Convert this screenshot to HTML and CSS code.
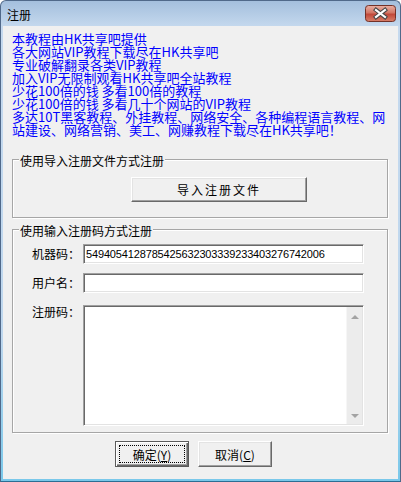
FILE: index.html
```html
<!DOCTYPE html>
<html lang="zh-CN">
<head>
  <meta charset="UTF-8">
  <title>注册</title>
  <link rel="stylesheet" href="styles.css">
</head>
<body>
  <div class="window">
    <div class="titlebar">
      <span class="title">注册</span>
      <span class="close">
        <svg width="31" height="17" viewBox="0 0 31 17">
          <defs>
            <linearGradient id="closeGrad" x1="0" y1="0" x2="0" y2="1">
              <stop offset="0" stop-color="#eab0a4"/>
              <stop offset="0.45" stop-color="#d27766"/>
              <stop offset="0.55" stop-color="#c1493a"/>
              <stop offset="1" stop-color="#d8806a"/>
            </linearGradient>
          </defs>
          <rect x="0.5" y="0.5" width="30" height="16" rx="3" fill="url(#closeGrad)" stroke="#733127"/>
          <path d="M11 5 L20 12 M20 5 L11 12" stroke="#454545" stroke-width="4.2" stroke-linecap="square"/>
          <path d="M11 5 L20 12 M20 5 L11 12" stroke="#ffffff" stroke-width="2.2" stroke-linecap="square"/>
        </svg>
      </span>
    </div>

    <div class="client">
      <div class="notice">
        <p>本教程由HK共享吧提供</p>
        <p>各大网站VIP教程下载尽在HK共享吧</p>
        <p>专业破解翻录各类VIP教程</p>
        <p>加入VIP无限制观看HK共享吧全站教程</p>
        <p>少花100倍的钱 多看100倍的教程</p>
        <p>少花100倍的钱 多看几十个网站的VIP教程</p>
        <p>多达10T黑客教程、外挂教程、网络安全、各种编程语言教程、网</p>
        <p>站建设、网络营销、美工、网赚教程下载尽在HK共享吧！</p>
      </div>

      <div class="group group-file">
        <div class="legend">使用导入注册文件方式注册</div>
        <button class="btn btn-import">导入注册文件</button>
      </div>

      <div class="group group-code">
        <div class="legend">使用输入注册码方式注册</div>
        <div class="form">
          <label>机器码：</label>
          <div class="edit">5494054128785425632303339233403276742006</div>
          <label>用户名：</label>
          <div class="edit"></div>
          <label class="label-top">注册码：</label>
          <div class="memo">
            <div class="memo-body"></div>
            <div class="scroll">
              <span class="arrow up"></span>
              <span class="arrow down"></span>
            </div>
          </div>
        </div>
      </div>

      <div class="actions">
        <button class="btn btn-default">确定(<u>Y</u>)</button>
        <button class="btn">取消(<u>C</u>)</button>
      </div>
    </div>
  </div>
</body>
</html>
```

FILE: styles.css
```css
body {
  margin: 0;
  font-family: "Noto Sans CJK SC", sans-serif;
  font-size: 12px;
  color: #000;
}
.window {
  width: 401px;
  height: 482px;
  box-sizing: border-box;
  border: 1px solid #50698a;
  border-bottom-color: #2b6e93;
  border-radius: 6px 6px 0 0;
  padding: 0 2px 2px;
  background: linear-gradient(#a4bfdd, #c5d9ee 26px, #bed7ee 70%, #79c8ea);
  display: flex;
  flex-direction: column;
}
.titlebar {
  height: 25px;
  display: flex;
  justify-content: space-between;
  align-items: flex-start;
  padding-left: 4px;
}
.title {
  line-height: 12px;
  margin-top: 8px;
}
.close {
  margin-top: 4px;
  margin-right: 2px;
  line-height: 0;
}
.client {
  flex: 1;
  background: #f0f0f0;
  padding: 6px 0 0 9px;
}
.notice {
  color: #0000ff;
  font-size: 13px;
  line-height: 13px;
}
.notice p {
  margin: 0;
  white-space: nowrap;
}
.group {
  width: 376px;
  box-sizing: border-box;
  border: 1px solid #a6a6a6;
  box-shadow: inset 1px 1px #fff, 1px 1px #fff;
}
.group-file {
  margin-top: 23px;
  height: 59px;
}
.group-code {
  margin-top: 11px;
  height: 204px;
}
.legend {
  width: fit-content;
  height: 12px;
  line-height: 12px;
  margin: -5px 0 0 6px;
  padding: 0 1px;
  background: #f0f0f0;
}
.btn {
  display: block;
  padding: 0;
  font-family: "Noto Sans CJK SC", sans-serif;
  font-size: 12px;
  color: #000;
  background: #f0f0f0;
  border: 1px solid;
  border-color: #fff #696969 #696969 #fff;
  box-shadow: inset -1px -1px #a0a0a0, inset 1px 1px #e3e3e3;
  width: 74px;
  height: 26px;
}
.btn-import {
  width: 176px;
  height: 25px;
  margin: 10px 0 0 118px;
  letter-spacing: 2px;
}
.form {
  display: grid;
  grid-template-columns: 67px 281px;
  column-gap: 3px;
  row-gap: 9px;
  align-items: center;
  margin-top: 7px;
}
.form label {
  justify-self: end;
  line-height: 12px;
}
.form .label-top {
  align-self: start;
  margin-top: 4px;
}
.edit {
  height: 20px;
  box-sizing: border-box;
  background: #fff;
  border: 1px solid;
  border-color: #a0a0a0 #fff #fff #a0a0a0;
  box-shadow: inset 1px 1px #696969, inset -1px -1px #e3e3e3;
  padding-left: 2px;
  font-family: "Liberation Sans", sans-serif;
  font-size: 11px;
  line-height: 18px;
  letter-spacing: -0.15px;
  white-space: nowrap;
  overflow: hidden;
}
.memo {
  height: 121px;
  box-sizing: border-box;
  margin-top: 3px;
  display: flex;
  background: #fff;
  border: 1px solid;
  border-color: #a0a0a0 #fff #fff #a0a0a0;
  box-shadow: inset 1px 1px #696969, inset -1px -1px #e3e3e3;
  padding: 1px;
}
.memo-body {
  flex: 1;
}
.scroll {
  width: 16px;
  box-sizing: border-box;
  background: #ececec;
  border-left: 1px solid #f6f6f6;
  display: flex;
  flex-direction: column;
  align-items: center;
  justify-content: space-between;
  padding: 8px 0 6px;
}
.arrow {
  width: 0;
  height: 0;
  border-left: 4px solid transparent;
  border-right: 4px solid transparent;
}
.arrow.up {
  border-bottom: 4px solid #a3a3a3;
}
.arrow.down {
  border-top: 4px solid #a3a3a3;
}
.actions {
  display: flex;
  gap: 9px;
  margin: 8px 0 0 103px;
}
.btn-default {
  border: 1px solid #5a5a5a;
  box-shadow: inset 1px 1px #fff, inset -1px -1px #696969, inset -2px -2px #a0a0a0;
  outline: 1px dotted #000;
  outline-offset: -5px;
}
```
